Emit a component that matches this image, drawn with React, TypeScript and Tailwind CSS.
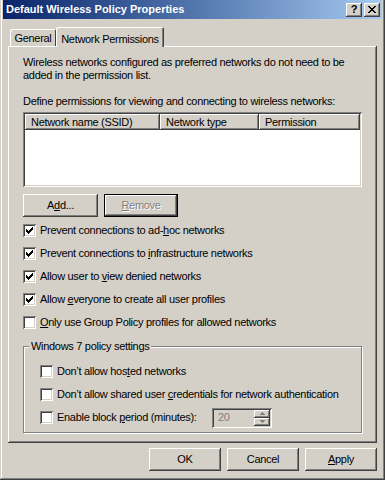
import type { ReactNode } from 'react';

// classic 3D edges
const raised = 'shadow-[inset_-1px_-1px_0_#404040,inset_1px_1px_0_#ffffff,inset_-2px_-2px_0_#808080]';
const sunken = 'shadow-[inset_1px_1px_0_#808080,inset_-1px_-1px_0_#ffffff,inset_2px_2px_0_#404040,inset_-2px_-2px_0_#d4d0c8]';

function CheckMark() {
  const tops = [2, 3, 4, 3, 2, 1, 0];
  return (
    <svg width="7" height="7" viewBox="0 0 7 7" shapeRendering="crispEdges">
      {tops.map((y, x) => (
        <rect key={x} x={x} y={y} width="1" height="3" fill="#000" />
      ))}
    </svg>
  );
}

function Checkbox({ checked }: { checked?: boolean }) {
  return (
    <span className={`flex h-[13px] w-[13px] shrink-0 items-center justify-center bg-white ${sunken}`}>
      {checked && <CheckMark />}
    </span>
  );
}

function CheckRow({ checked, children }: { checked?: boolean; children: ReactNode }) {
  return (
    <div className="flex h-[13px] items-center gap-[4px]">
      <Checkbox checked={checked} />
      <span className="leading-[13px] whitespace-nowrap">{children}</span>
    </div>
  );
}

function Button({ children, className = '' }: { children: ReactNode; className?: string }) {
  return (
    <div className={`flex h-[23px] items-center justify-center ${raised} ${className}`}>
      {children}
    </div>
  );
}

function Arrow({ up }: { up?: boolean }) {
  return (
    <svg width="5" height="3" viewBox="0 0 5 3" shapeRendering="crispEdges">
      <path d={up ? 'M2 0h1v1h1v1h1v1H0V2h1V1h1z' : 'M0 0h5v1H4v1H3v1H2V2H1V1H0z'} fill="#808080" />
    </svg>
  );
}

export default function App() {
  return (
    <div className="flex h-[480px] w-[385px] flex-col bg-[#d4d0c8] px-[3px] text-[11px] text-black shadow-[inset_-1px_-1px_0_#404040,inset_1px_0_0_#d4d0c8,inset_-2px_-2px_0_#808080,inset_2px_0_0_#ffffff] font-['Liberation_Sans',Arial,sans-serif]">
      {/* Title bar */}
      <div className="flex h-[19px] items-center bg-gradient-to-r from-[#0a246a] to-[#a6caf0] pl-[3px] pr-[2px]">
        <span className="flex-1 font-bold text-white leading-none">Default Wireless Policy Properties</span>
        <div className={`flex h-[14px] w-[16px] items-center justify-center bg-[#d4d0c8] font-bold text-[11px] leading-none ${raised}`}>?</div>
        <div className={`ml-[2px] flex h-[14px] w-[16px] items-center justify-center bg-[#d4d0c8] ${raised}`}>
          <svg width="8" height="7" viewBox="0 0 8 7" shapeRendering="crispEdges">
            <path d="M0 0h2v1h1v1h2V1h1V0h2v1H7v1H6v1H5v1h1v1h1v1h1v1H6V6H5V5H3v1H2v1H0V6h1V5h1V4h1V3H2V2H1V1H0z" fill="#000" />
          </svg>
        </div>
      </div>

      {/* Body */}
      <div className="flex flex-1 flex-col pl-[5px] pr-[5px] pt-[8px] tracking-[-0.3px]">
        {/* Tabs */}
        <div className="flex h-[19px] items-end pl-[2px]">
          <div className="flex h-[17px] w-[46px] items-center justify-center rounded-t-[2px] pt-[2px] shadow-[inset_1px_1px_0_#ffffff,inset_-1px_0_0_#404040]">
            General
          </div>
          <div className="relative z-10 -mb-[1px] flex h-[20px] w-[108px] items-start justify-center rounded-t-[2px] bg-[#d4d0c8] pt-[4px] shadow-[inset_1px_1px_0_#ffffff,inset_-1px_0_0_#404040,inset_-2px_0_0_#808080]">
            Network Permissions
          </div>
        </div>

        {/* Panel */}
        <div className={`flex h-[397px] flex-col px-[15px] pt-[10px] ${raised}`}>
          <p className="leading-[13px]">
            Wireless networks configured as preferred networks do not need to be added in the permission list.
          </p>
          <p className="mt-[13px] leading-[13px]">
            Define permissions for viewing and connecting to wireless networks:
          </p>

          {/* List view */}
          <div className={`mt-[4px] flex h-[75px] flex-col bg-white p-[2px] ${sunken}`}>
            <div className="flex h-[16px]">
              <div className={`flex w-[135px] items-center bg-[#d4d0c8] pl-[6px] ${raised}`}>Network name (SSID)</div>
              <div className={`flex w-[99px] items-center bg-[#d4d0c8] pl-[6px] ${raised}`}>Network type</div>
              <div className={`flex flex-1 items-center bg-[#d4d0c8] pl-[6px] ${raised}`}>Permission</div>
            </div>
          </div>

          <div className="mt-[7px] flex gap-[6px]">
            <Button className="w-[75px]">
              A<u>d</u>d...
            </Button>
            <div className="h-[23px] w-[74px] border border-black">
              <div className={`flex h-full items-center justify-center text-[#808080] text-shadow-[1px_1px_0_#ffffff] ${raised}`}>
                <u>R</u>emove
              </div>
            </div>
          </div>

          <div className="mt-[7px] flex flex-col gap-[10px]">
            <CheckRow checked>
              Prevent connections to ad-<u>h</u>oc networks
            </CheckRow>
            <CheckRow checked>
              Prevent connections to <u>i</u>nfrastructure networks
            </CheckRow>
            <CheckRow checked>
              Allow user to <u>v</u>iew denied networks
            </CheckRow>
            <CheckRow checked>
              Allow <u>e</u>veryone to create all user profiles
            </CheckRow>
            <CheckRow>
              <u>O</u>nly use Group Policy profiles for allowed networks
            </CheckRow>
          </div>

          {/* Group box */}
          <fieldset className="mt-[11px] h-[93px] border border-[#808080] shadow-[inset_1px_1px_0_#ffffff,1px_1px_0_#ffffff]">
            <legend className="ml-[5px] bg-[#d4d0c8] px-[2px] leading-[13px]">Windows 7 policy settings</legend>
            <div className="flex flex-col pl-[16px] pt-[7px]">
              <div className="flex h-[23px] items-center">
                <CheckRow>
                  Don’t allow hos<u>t</u>ed networks
                </CheckRow>
              </div>
              <div className="flex h-[23px] items-center">
                <CheckRow>
                  Don’t allow shared user <u>c</u>redentials for network authentication
                </CheckRow>
              </div>
              <div className="flex h-[23px] items-center">
                <div className="w-[172px]">
                  <CheckRow>
                    Enable block <u>p</u>eriod (minutes):
                  </CheckRow>
                </div>
                <div className={`flex h-[20px] w-[60px] items-center bg-[#d4d0c8] pl-[6px] pr-[2px] ${sunken}`}>
                  <span className="flex-1 text-[#808080]">20</span>
                  <div className="flex h-[16px] w-[16px] flex-col">
                    <div className={`flex flex-1 items-center justify-center ${raised}`}>
                      <Arrow up />
                    </div>
                    <div className={`flex flex-1 items-center justify-center ${raised}`}>
                      <Arrow />
                    </div>
                  </div>
                </div>
              </div>
            </div>
          </fieldset>
        </div>

        {/* Dialog buttons */}
        <div className="mt-[5px] flex justify-end gap-[6px]">
          <Button className="w-[72px]">OK</Button>
          <Button className="w-[72px]">Cancel</Button>
          <Button className="w-[72px]">
            <u>A</u>pply
          </Button>
        </div>
      </div>
    </div>
  );
}
